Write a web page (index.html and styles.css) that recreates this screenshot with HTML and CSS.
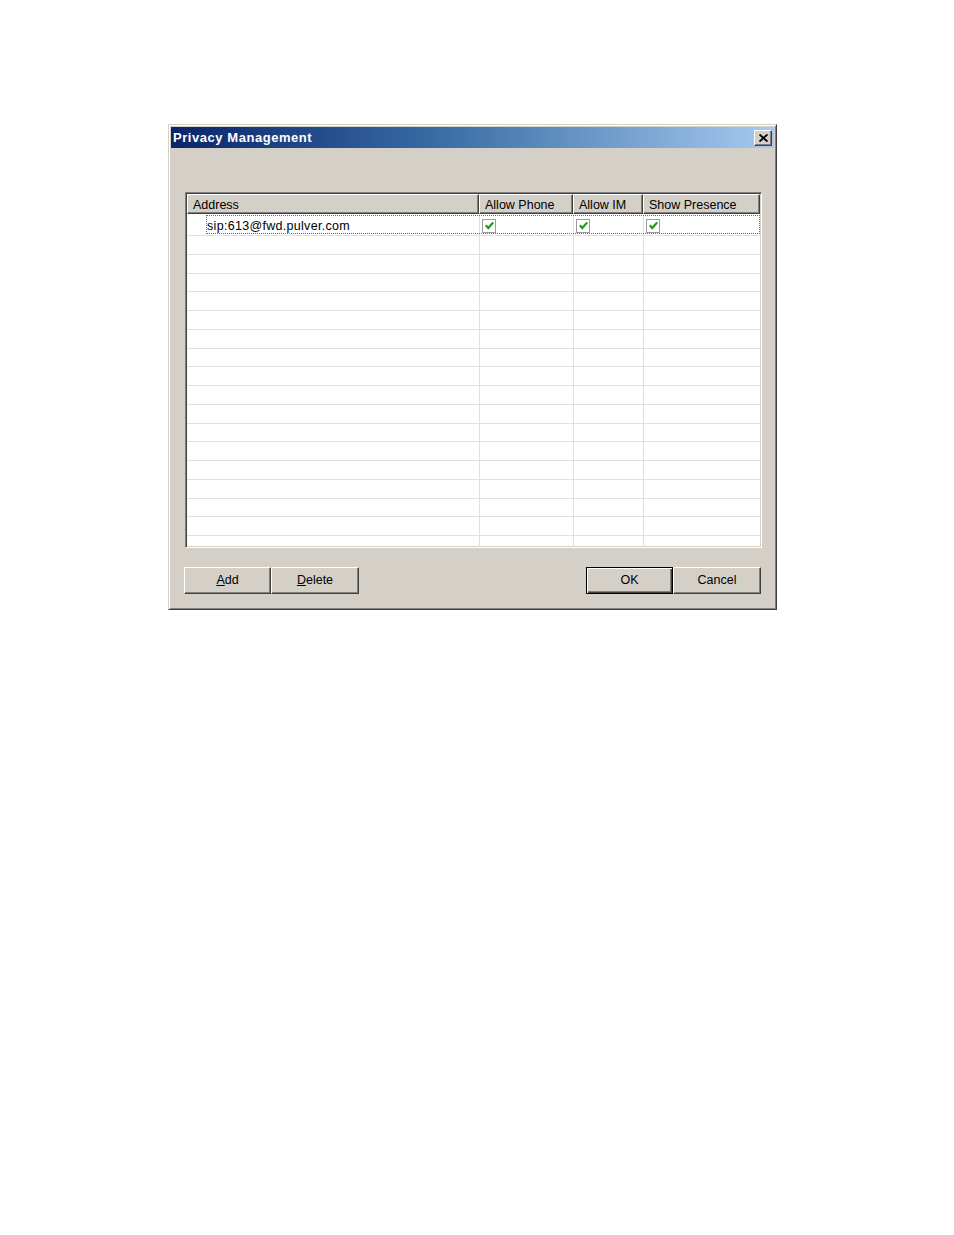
FILE: index.html
```html
<!DOCTYPE html>
<html lang="en">
<head>
    <meta charset="UTF-8">
    <title>Privacy Management</title>
    <link rel="stylesheet" href="styles.css">
</head>
<body>
    <div class="dialog">
        <div class="titlebar">
            <span class="title">Privacy Management</span>
            <button class="close-btn" aria-label="Close">
                <svg width="9" height="8" viewBox="0 0 9 8">
                    <path d="M0.5 0.5 L8.5 7.5 M8.5 0.5 L0.5 7.5" stroke="#000" stroke-width="1.8" fill="none"/>
                </svg>
            </button>
        </div>

        <div class="dialog-body">
            <div class="listview">
                <div class="lv-header">
                    <div class="col col-address">Address</div>
                    <div class="col col-phone">Allow Phone</div>
                    <div class="col col-im">Allow IM</div>
                    <div class="col col-presence">Show Presence</div>
                </div>

                <div class="lv-rows">
                    <div class="row first">
                        <div class="cell col-address"><span class="address">sip:613@fwd.pulver.com</span></div>
                        <div class="cell col-phone"><span class="check"><svg width="11" height="11" viewBox="0 0 11 11"><path d="M1.8 5.3 L4.3 8 L9.2 2.4" stroke="#1f9a1f" stroke-width="2.2" fill="none"/></svg></span></div>
                        <div class="cell col-im"><span class="check"><svg width="11" height="11" viewBox="0 0 11 11"><path d="M1.8 5.3 L4.3 8 L9.2 2.4" stroke="#1f9a1f" stroke-width="2.2" fill="none"/></svg></span></div>
                        <div class="cell col-presence"><span class="check"><svg width="11" height="11" viewBox="0 0 11 11"><path d="M1.8 5.3 L4.3 8 L9.2 2.4" stroke="#1f9a1f" stroke-width="2.2" fill="none"/></svg></span></div>
                        <span class="focus"></span>
                    </div>
                    <div class="row"><div class="cell col-address"></div><div class="cell col-phone"></div><div class="cell col-im"></div><div class="cell col-presence"></div></div>
                    <div class="row"><div class="cell col-address"></div><div class="cell col-phone"></div><div class="cell col-im"></div><div class="cell col-presence"></div></div>
                    <div class="row"><div class="cell col-address"></div><div class="cell col-phone"></div><div class="cell col-im"></div><div class="cell col-presence"></div></div>
                    <div class="row"><div class="cell col-address"></div><div class="cell col-phone"></div><div class="cell col-im"></div><div class="cell col-presence"></div></div>
                    <div class="row"><div class="cell col-address"></div><div class="cell col-phone"></div><div class="cell col-im"></div><div class="cell col-presence"></div></div>
                    <div class="row"><div class="cell col-address"></div><div class="cell col-phone"></div><div class="cell col-im"></div><div class="cell col-presence"></div></div>
                    <div class="row"><div class="cell col-address"></div><div class="cell col-phone"></div><div class="cell col-im"></div><div class="cell col-presence"></div></div>
                    <div class="row"><div class="cell col-address"></div><div class="cell col-phone"></div><div class="cell col-im"></div><div class="cell col-presence"></div></div>
                    <div class="row"><div class="cell col-address"></div><div class="cell col-phone"></div><div class="cell col-im"></div><div class="cell col-presence"></div></div>
                    <div class="row"><div class="cell col-address"></div><div class="cell col-phone"></div><div class="cell col-im"></div><div class="cell col-presence"></div></div>
                    <div class="row"><div class="cell col-address"></div><div class="cell col-phone"></div><div class="cell col-im"></div><div class="cell col-presence"></div></div>
                    <div class="row"><div class="cell col-address"></div><div class="cell col-phone"></div><div class="cell col-im"></div><div class="cell col-presence"></div></div>
                    <div class="row"><div class="cell col-address"></div><div class="cell col-phone"></div><div class="cell col-im"></div><div class="cell col-presence"></div></div>
                    <div class="row"><div class="cell col-address"></div><div class="cell col-phone"></div><div class="cell col-im"></div><div class="cell col-presence"></div></div>
                    <div class="row"><div class="cell col-address"></div><div class="cell col-phone"></div><div class="cell col-im"></div><div class="cell col-presence"></div></div>
                    <div class="row"><div class="cell col-address"></div><div class="cell col-phone"></div><div class="cell col-im"></div><div class="cell col-presence"></div></div>
                    <div class="row"><div class="cell col-address"></div><div class="cell col-phone"></div><div class="cell col-im"></div><div class="cell col-presence"></div></div>
                </div>
            </div>

            <div class="buttons">
                <div class="btn-group">
                    <button class="btn btn-add"><u>A</u>dd</button>
                    <button class="btn btn-delete"><u>D</u>elete</button>
                </div>
                <div class="btn-group">
                    <button class="btn btn-ok default">OK</button>
                    <button class="btn btn-cancel">Cancel</button>
                </div>
            </div>
        </div>
    </div>
</body>
</html>
```

FILE: styles.css
```css
* {
    box-sizing: border-box;
}
body {
    margin: 0;
    background-color: #ffffff;
    font-family: "Liberation Sans", Arial, sans-serif;
    font-size: 12.5px;
    color: #000;
}

/* window frame */
.dialog {
    width: 609px;
    height: 486px;
    margin: 124px 0 0 168px;
    padding: 2px;
    background-color: #d4d0c8;
    border: 1px solid;
    border-color: #d4d0c8 #404040 #404040 #d4d0c8;
    box-shadow: inset 1px 1px #ffffff, inset -1px -1px #808080;
}
.titlebar {
    height: 21px;
    display: flex;
    align-items: center;
    justify-content: space-between;
    padding: 0 2px 0 2px;
    background: linear-gradient(to right, #0a246a 0%, #3a6ea5 45%, #a6caf0 100%);
}
.title {
    color: #ffffff;
    font-weight: bold;
    font-size: 13px;
    letter-spacing: 0.55px;
}
.close-btn {
    width: 18px;
    height: 16px;
    padding: 0;
    display: flex;
    align-items: center;
    justify-content: center;
    background-color: #d4d0c8;
    border: 1px solid;
    border-color: #ffffff #404040 #404040 #ffffff;
    box-shadow: inset -1px -1px #808080;
}

.dialog-body {
    padding: 44px 12px 0 14px;
}

/* list view */
.listview {
    width: 577px;
    height: 356px;
    overflow: hidden;
    background-color: #ffffff;
    border: 1px solid;
    border-color: #808080 #ffffff #ffffff #808080;
    box-shadow: inset 1px 1px #404040, inset -1px -1px #d4d0c8;
    padding: 1px;
}
.lv-header {
    display: flex;
    height: 20px;
}
.lv-header .col {
    height: 20px;
    line-height: 20px;
    padding-left: 5px;
    background-color: #d4d0c8;
    border: 1px solid;
    border-color: #ffffff #404040 #404040 #ffffff;
    box-shadow: inset -1px -1px #808080;
    white-space: nowrap;
}
.col-address { width: 292px; }
.col-phone { width: 94px; }
.col-im { width: 70px; }
.col-presence { width: 117px; }

.row {
    display: flex;
    height: 18.75px;
    border-bottom: 1px solid #e3e0da;
}
.row.first {
    position: relative;
    height: 22px;
}
.row .col-address { width: 293px; }
.row .col-phone { width: 94px; }
.row .col-im { width: 70px; }
.row .col-presence { width: 116px; }
.cell {
    height: 100%;
    border-right: 1px solid #e3e0da;
    display: flex;
    align-items: center;
}
.cell.col-presence {
    border-right: none;
}
.address {
    padding: 3px 0 0 20px;
    letter-spacing: 0.3px;
}
.check {
    width: 14px;
    height: 14px;
    margin: 2px 0 0 2px;
    border: 1px solid #9c9c9c;
    background-color: #ffffff;
    display: flex;
    align-items: center;
    justify-content: center;
}
.focus {
    position: absolute;
    left: 19px;
    right: 0;
    top: 1px;
    bottom: 1px;
    border: 1px dotted #6a6a6a;
    pointer-events: none;
}

/* buttons */
.buttons {
    display: flex;
    justify-content: space-between;
    margin-top: 19px;
}
.btn-group {
    display: flex;
}
.buttons .btn-group:first-child {
    margin-left: -1px;
}
.buttons .btn-group:last-child {
    margin-right: 1px;
}
.btn {
    height: 27px;
    padding: 0 0 2px 0;
    font-family: "Liberation Sans", Arial, sans-serif;
    font-size: 12.5px;
    color: #000;
    background-color: #d4d0c8;
    border: 1px solid;
    border-color: #ffffff #404040 #404040 #ffffff;
    box-shadow: inset -1px -1px #808080;
}
.btn-add { width: 87px; }
.btn-delete { width: 88px; }
.btn-ok { width: 87px; }
.btn-cancel { width: 88px; }
.btn.default {
    border-color: #000;
    box-shadow: inset 1px 1px #ffffff, inset -1px -1px #404040, inset -2px -2px #808080;
}
```
